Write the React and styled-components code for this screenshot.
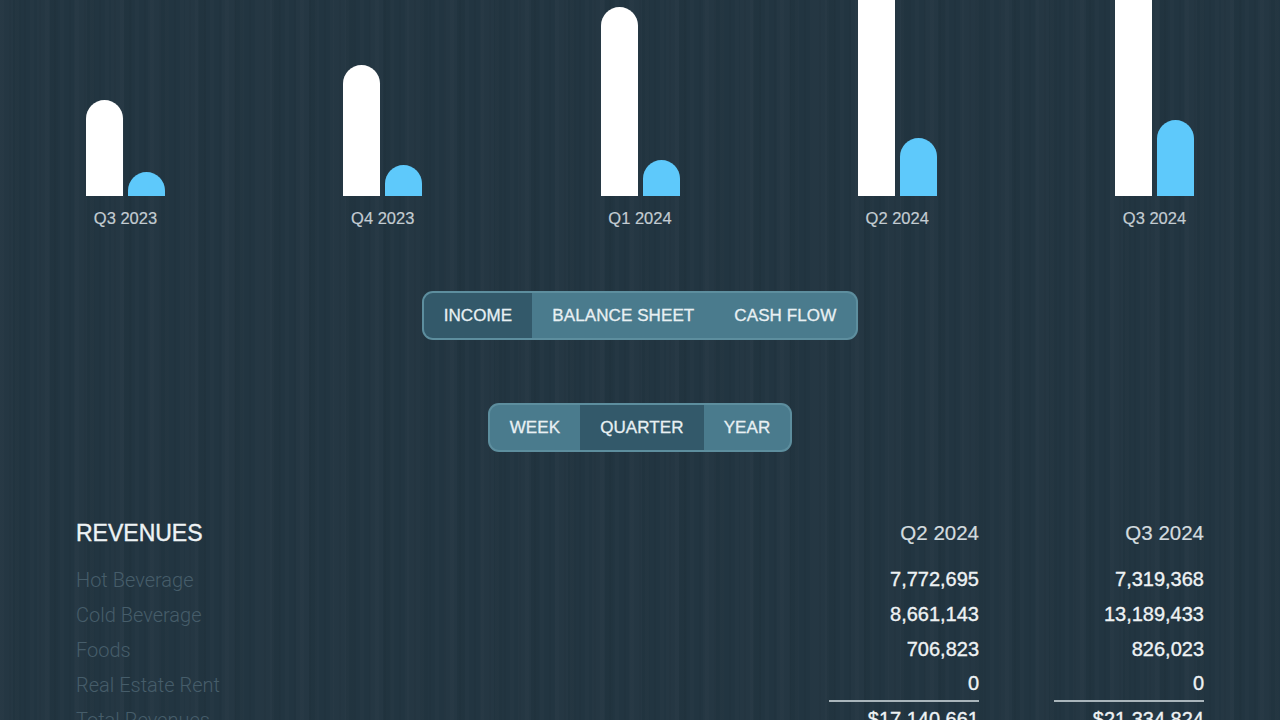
import React from "react";
import styled, { createGlobalStyle } from "styled-components";

const Global = createGlobalStyle`
  html, body { margin: 0; padding: 0; }
  body {
    width: 1280px;
    height: 720px;
    overflow: hidden;
    background-color: #223541;
    background-image:
      repeating-linear-gradient(90deg, rgba(255,255,255,0.012) 0 4px, rgba(0,0,0,0) 4px 9px, rgba(0,0,0,0.03) 9px 11px, rgba(0,0,0,0) 11px 15px),
      repeating-linear-gradient(90deg, rgba(255,255,255,0.01) 0 13px, rgba(0,0,0,0.025) 13px 21px, rgba(0,0,0,0) 21px 37px);
    font-family: "Liberation Sans", Arial, sans-serif;
  }
`;

const Page = styled.div`
  padding: 0 76px;
  display: flex;
  flex-direction: column;
`;

const Chart = styled.div`
  display: flex;
  justify-content: space-between;
  padding: 0 10px;
`;

const Group = styled.div`
  display: flex;
  flex-direction: column;
  align-items: center;
`;

const Bars = styled.div`
  height: 196px;
  display: flex;
  align-items: flex-end;
  gap: 5px;
  overflow: hidden;
`;

const Bar = styled.div`
  width: 37px;
  border-radius: 18.5px 18.5px 0 0;
  background: ${(p) => (p.$kind === "blue" ? "#5ec9fb" : "#ffffff")};
`;

const BarLabel = styled.div`
  margin-top: 12px;
  font-size: 16.5px;
  line-height: 20px;
  color: #c3ccd2;
  -webkit-text-stroke: 0.2px #c3ccd2;
`;

const Segmented = styled.div`
  align-self: center;
  display: flex;
  height: 49px;
  box-sizing: border-box;
  border: 2px solid rgba(140, 185, 200, 0.3);
  border-radius: 11px;
  overflow: hidden;
  margin-top: ${(p) => p.$mt}px;
  background: #4a7b8d;
`;

const Segment = styled.div`
  display: flex;
  align-items: center;
  padding: 0 ${(p) => p.$pad || 20}px;
  font-size: 17px;
  color: #e8f0f3;
  -webkit-text-stroke: 0.3px #e8f0f3;
  letter-spacing: 0.1px;
  background: ${(p) => (p.$active ? "#33596a" : "transparent")};
`;

const Table = styled.div`
  margin-top: 66px;
  display: grid;
  grid-template-columns: 1fr 150px 150px;
  column-gap: 75px;
`;

const Title = styled.div`
  height: 30px;
  margin-bottom: 14px;
  display: flex;
  align-items: center;
  font-size: 23px;
  color: #eef3f5;
  -webkit-text-stroke: 0.4px #eef3f5;
`;

const ColHead = styled(Title)`
  justify-content: flex-end;
  font-size: 20.5px;
  color: #d3dbdf;
  -webkit-text-stroke: 0.2px #d3dbdf;
`;

const RowLabel = styled.div`
  height: 35px;
  display: flex;
  align-items: center;
  font-family: Roboto, "Liberation Sans", sans-serif;
  font-weight: 300;
  font-size: 20px;
  color: #465d6a;
`;

const Value = styled.div`
  height: 35px;
  box-sizing: border-box;
  display: flex;
  align-items: center;
  justify-content: flex-end;
  font-size: 20px;
  color: #eef2f4;
  -webkit-text-stroke: 0.35px #eef2f4;
  border-bottom: ${(p) => (p.$rule ? "2px solid #a9b5bb" : "none")};
`;

const chart = [
  { label: "Q3 2023", w: 96, b: 24 },
  { label: "Q4 2023", w: 131, b: 31 },
  { label: "Q1 2024", w: 189, b: 36 },
  { label: "Q2 2024", w: 250, b: 58 },
  { label: "Q3 2024", w: 270, b: 76 },
];

const rows = [
  ["Hot Beverage", "7,772,695", "7,319,368"],
  ["Cold Beverage", "8,661,143", "13,189,433"],
  ["Foods", "706,823", "826,023"],
  ["Real Estate Rent", "0", "0"],
  ["Total Revenues", "$17,140,661", "$21,334,824"],
];

export default function App() {
  return (
    <>
      <Global />
      <Page>
        <Chart>
          {chart.map((c) => (
            <Group key={c.label}>
              <Bars>
                <Bar style={{ height: c.w }} />
                <Bar $kind="blue" style={{ height: c.b }} />
              </Bars>
              <BarLabel>{c.label}</BarLabel>
            </Group>
          ))}
        </Chart>

        <Segmented $mt={63}>
          <Segment $active>INCOME</Segment>
          <Segment $pad={20}>BALANCE SHEET</Segment>
          <Segment $pad={20}>CASH FLOW</Segment>
        </Segmented>

        <Segmented $mt={63}>
          <Segment>WEEK</Segment>
          <Segment $active>QUARTER</Segment>
          <Segment>YEAR</Segment>
        </Segmented>

        <Table>
          <Title>REVENUES</Title>
          <ColHead>Q2 2024</ColHead>
          <ColHead>Q3 2024</ColHead>
          {rows.map((r, i) => (
            <React.Fragment key={r[0]}>
              <RowLabel>{r[0]}</RowLabel>
              <Value $rule={i === 3}>{r[1]}</Value>
              <Value $rule={i === 3}>{r[2]}</Value>
            </React.Fragment>
          ))}
        </Table>
      </Page>
    </>
  );
}
